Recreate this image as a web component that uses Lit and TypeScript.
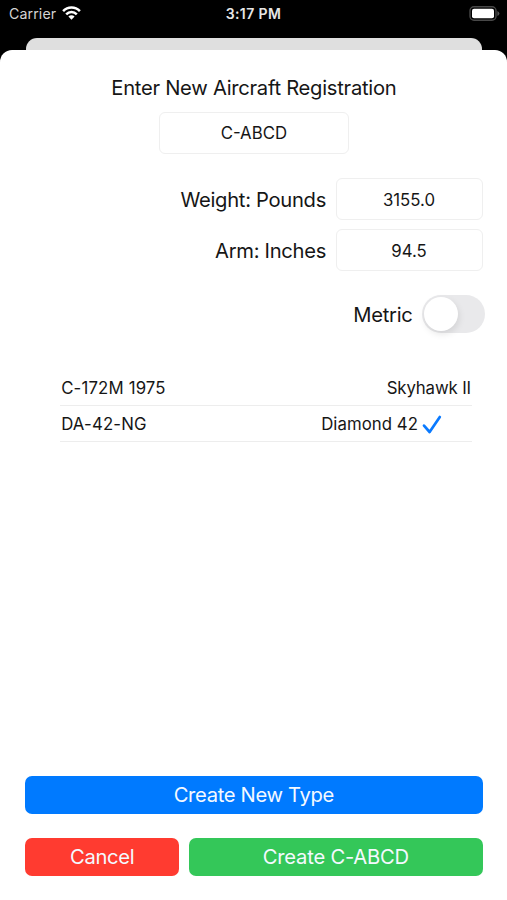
import { LitElement, html, css } from "lit";
import { customElement, property, state } from "lit/decorators.js";
import { classMap } from "lit/directives/class-map.js";

@customElement("status-bar")
class StatusBar extends LitElement {
  static styles = css`
    :host {
      display: grid;
      grid-template-columns: 1fr auto 1fr;
      align-items: center;
      height: 28px;
      padding: 0 7px 0 9px;
      color: #e6e6e6;
      font-size: 14.2px;
    }
    .left { display: flex; align-items: center; gap: 6px; color: #d4d4d4; letter-spacing: 0.1px; }
    .time { margin-right: 2px; font-weight: 600; font-size: 14px; letter-spacing: 0.4px; }
    .right { display: flex; justify-content: flex-end; }
    svg { display: block; }
    .wifi { margin-top: -2px; }
    .battery { margin-top: -1px; }
  `;
  render() {
    return html`
      <div class="left">
        <span>Carrier</span>
        <svg class="wifi" width="19" height="14" viewBox="0 0 19 14">
          <g fill="none" stroke="#fff" stroke-width="2.5">
            <path d="M1.1 5.1 C5.8 .2 13.2 .2 17.9 5.1" />
            <path d="M4.2 8.4 C7.2 5.2 11.8 5.2 14.8 8.4" />
          </g>
          <path fill="#fff" d="M6.4 10.6 C8.2 8.9 10.8 8.9 12.6 10.6 L9.5 13.7 Z" />
        </svg>
      </div>
      <div class="time">3:17 PM</div>
      <div class="right">
        <svg class="battery" width="31" height="15" viewBox="0 0 31 15">
          <rect x="1" y=".8" width="26" height="13.4" rx="4" fill="none" stroke="#484848" stroke-width="1.4" />
          <rect x="3" y="2.8" width="22" height="9.4" rx="2" fill="#fff" />
          <path d="M28.4 5 Q30.4 6 30.4 7.5 Q30.4 9 28.4 10 Z" fill="#555" />
        </svg>
      </div>
    `;
  }
}

@customElement("text-box")
class TextBox extends LitElement {
  @property() value = "";
  static styles = css`
    :host {
      display: flex;
      align-items: center;
      justify-content: center;
      box-sizing: border-box;
      height: 42px;
      padding-top: 1px;
      border: 1px solid #efefef;
      border-radius: 6px;
      font-size: 16.8px;
      letter-spacing: 0;
    }
  `;
  render() {
    return html`<span>${this.value}</span>`;
  }
}

interface AircraftType {
  code: string;
  name: string;
}

const types: AircraftType[] = [
  { code: "C-172M 1975", name: "Skyhawk II" },
  { code: "DA-42-NG", name: "Diamond 42" },
];

@customElement("app-root")
class AppRoot extends LitElement {
  @state() private selected = "DA-42-NG";
  @state() private metric = false;

  static styles = css`
    :host {
      display: flex;
      flex-direction: column;
      height: 900px;
      background: #000;
      color: #161616;
      font-family: Inter, "Liberation Sans", sans-serif;
      line-height: 1.2;
    }
    .behind {
      height: 12px;
      margin: 10px 25px 0 26px;
      border-radius: 11px 11px 0 0;
      background: #dfdfdf;
    }
    .sheet {
      flex: 1;
      box-sizing: border-box;
      display: flex;
      flex-direction: column;
      padding: 25px 24.5px 24.5px 25.2px;
      border-radius: 12px 12px 0 0;
      background: #fff;
    }
    .title {
      align-self: center;
      height: 37px;
      line-height: 25px;
      font-size: 20.2px;
      letter-spacing: -0.27px;
    }
    .registration { align-self: center; width: 190px; }
    .fields { display: grid; gap: 9px; margin-top: 24px; }
    .field {
      display: flex;
      align-items: center;
      justify-content: flex-end;
      gap: 9.5px;
      font-size: 20.2px;
      letter-spacing: -0.3px;
    }
    .label { padding-top: 2px; }
    .field text-box { width: 147px; padding-top: 2px; }
    .metric { margin: 24px -2.5px 0 0; }
    .toggle {
      box-sizing: border-box;
      width: 63px;
      height: 38px;
      padding: 2px;
      border-radius: 19px;
      background: #e9e9eb;
    }
    .knob {
      width: 34px;
      height: 34px;
      border-radius: 50%;
      background: #fff;
      box-shadow: 1px 3px 7px rgba(0, 0, 0, 0.1);
    }
    .toggle.on { background: #34c759; }
    .toggle.on .knob { margin-left: 25px; }
    .list { margin: 36px 10.5px 0 35px; }
    .row {
      display: flex;
      align-items: center;
      justify-content: space-between;
      box-sizing: border-box;
      height: 36.7px;
      padding: 2px 1px 0;
      border-bottom: 1px solid #ededed;
      font-size: 16.8px;
      letter-spacing: 0.15px;
    }
    .name { display: flex; align-items: center; gap: 4px; letter-spacing: -0.12px; }
    .row.selected .name { padding-right: 29px; letter-spacing: 0.05px; }
    .check { display: block; width: 20px; height: 20px; }
    .actions {
      display: grid;
      grid-template-columns: 154px 1fr;
      gap: 24px 10px;
      margin-top: auto;
    }
    .button {
      display: flex;
      align-items: center;
      justify-content: center;
      box-sizing: border-box;
      height: 38px;
      padding-top: 1.5px;
      border-radius: 7px;
      color: #f4f9ff;
      font-size: 20.2px;
      letter-spacing: -0.33px;
    }
    .new-type { grid-column: 1 / -1; background: #007aff; }
    .cancel { background: #ff3b30; }
    .create { background: #34c759; letter-spacing: -0.22px; }
  `;

  private renderRow(type: AircraftType) {
    const selected = type.code === this.selected;
    return html`
      <div class=${classMap({ row: true, selected })} @click=${() => (this.selected = type.code)}>
        <span>${type.code}</span>
        <span class="name">
          <span>${type.name}</span>
          ${selected
            ? html`<svg class="check" viewBox="0 0 20 20">
                <path d="M2 10.6 L7.6 17 L17.8 2" fill="none" stroke="#0a7aff" stroke-width="2.7" stroke-linecap="round" stroke-linejoin="round" />
              </svg>`
            : null}
        </span>
      </div>
    `;
  }

  render() {
    return html`
      <status-bar></status-bar>
      <div class="behind"></div>
      <div class="sheet">
        <div class="title">Enter New Aircraft Registration</div>
        <text-box class="registration" value="C-ABCD"></text-box>
        <div class="fields">
          <div class="field"><span class="label">Weight: Pounds</span><text-box value="3155.0"></text-box></div>
          <div class="field"><span class="label">Arm: Inches</span><text-box value="94.5"></text-box></div>
        </div>
        <div class="field metric">
          <span class="label">Metric</span>
          <div class=${classMap({ toggle: true, on: this.metric })} @click=${() => (this.metric = !this.metric)}>
            <div class="knob"></div>
          </div>
        </div>
        <div class="list">${types.map((type) => this.renderRow(type))}</div>
        <div class="actions">
          <div class="button new-type">Create New Type</div>
          <div class="button cancel">Cancel</div>
          <div class="button create">Create C-ABCD</div>
        </div>
      </div>
    `;
  }
}
